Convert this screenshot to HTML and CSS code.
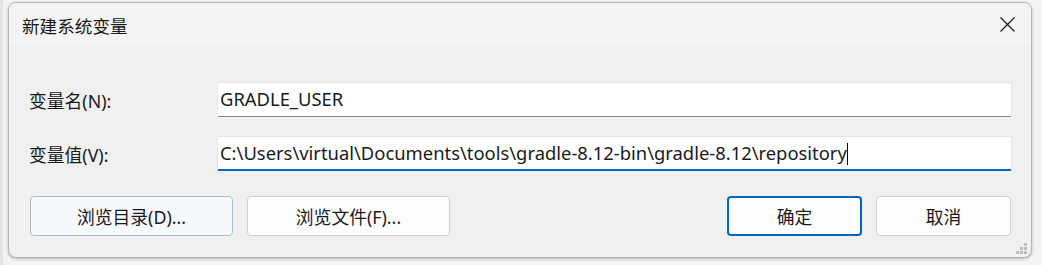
FILE: index.html
```html
<!DOCTYPE html>
<html lang="zh-CN">
<head>
    <meta charset="UTF-8">
    <title>新建系统变量</title>
    <link rel="stylesheet" href="styles.css">
</head>
<body>
    <div class="backdrop">
        <div class="dialog">
            <!-- 标题栏 -->
            <div class="titlebar">
                <span class="title">新建系统变量</span>
                <svg class="close" width="15" height="15" viewBox="0 0 15 15">
                    <path d="M0.5 0.5 L14.5 14.5 M14.5 0.5 L0.5 14.5" stroke="#1a1a1a" stroke-width="1.2" fill="none"/>
                </svg>
            </div>

            <!-- 表单 -->
            <div class="form">
                <div class="row">
                    <label class="label">变量名(N):</label>
                    <div class="input">GRADLE_USER</div>
                </div>
                <div class="row">
                    <label class="label">变量值(V):</label>
                    <div class="input focused">C:\Users\virtual\Documents\tools\gradle-8.12-bin\gradle-8.12\repository<span class="caret"></span></div>
                </div>
            </div>

            <!-- 按钮 -->
            <div class="buttons">
                <div class="left-buttons">
                    <button class="btn btn-wide hover">浏览目录(D)...</button>
                    <button class="btn btn-wide">浏览文件(F)...</button>
                </div>
                <div class="right-buttons">
                    <button class="btn btn-small primary">确定</button>
                    <button class="btn btn-small">取消</button>
                </div>
            </div>

            <svg class="grip" width="12" height="12" viewBox="0 0 12 12">
                <rect x="8" y="0" width="3" height="3" fill="#bcbcbc"/>
                <rect x="4" y="4" width="3" height="3" fill="#bcbcbc"/>
                <rect x="8" y="4" width="3" height="3" fill="#bcbcbc"/>
                <rect x="0" y="8" width="3" height="3" fill="#bcbcbc"/>
                <rect x="4" y="8" width="3" height="3" fill="#bcbcbc"/>
                <rect x="8" y="8" width="3" height="3" fill="#bcbcbc"/>
            </svg>
        </div>
    </div>
</body>
</html>
```

FILE: styles.css
```css
body {
    margin: 0;
    background-color: #e9e9e9;
    font-family: "Noto Sans", "Noto Sans CJK SC", sans-serif;
    color: #1a1a1a;
}
.backdrop {
    height: 265px;
    padding: 2px 10px 0 8px;
    box-sizing: border-box;
    background: linear-gradient(to right, #e3e3e3 0, #e3e3e3 3px, #f3f3f3 3px);
}
.dialog {
    position: relative;
    width: 1024px;
    height: 256px;
    box-sizing: border-box;
    background-color: #f0f0f0;
    border: 1px solid #b4b4b4;
    border-radius: 8px;
    box-shadow: 0 1px 3px rgba(0, 0, 0, 0.25);
    overflow: hidden;
}
.titlebar {
    height: 42px;
    display: flex;
    align-items: center;
    justify-content: space-between;
    padding: 0 16px 0 13px;
    background-color: #f3f3f3;
}
.title {
    font-size: 17.6px;
    padding-top: 2px;
}
.close {
    display: block;
    margin-top: 1px;
}
.form {
    padding: 37px 19px 0 19px;
    display: flex;
    flex-direction: column;
    gap: 19px;
}
.row {
    display: flex;
    align-items: center;
}
.label {
    width: 188px;
    font-size: 17.8px;
    padding-left: 1px;
}
.input {
    flex: 1;
    height: 35px;
    box-sizing: border-box;
    background-color: #fff;
    border: 1px solid #e5e5e5;
    border-bottom: 1px solid #868686;
    border-radius: 2px;
    padding-left: 2px;
    font-size: 18.4px;
    line-height: 31px;
    white-space: nowrap;
    overflow: hidden;
}
.input.focused {
    border-bottom: 2px solid #0067c0;
}
.caret {
    display: inline-block;
    width: 1px;
    height: 22px;
    background-color: #000;
    vertical-align: -5px;
}
.buttons {
    display: flex;
    justify-content: space-between;
    padding: 25px 20px 0 21px;
}
.left-buttons, .right-buttons {
    display: flex;
    gap: 14px;
}
.btn {
    height: 40px;
    font-family: "Noto Sans", "Noto Sans CJK SC", sans-serif;
    font-size: 17.8px;
    color: #1a1a1a;
    background-color: #fdfdfd;
    border: 1px solid #d0d0d0;
    border-radius: 4px;
    padding: 0;
}
.btn-wide {
    width: 203px;
}
.btn-small {
    width: 135px;
}
.btn.hover {
    background-color: #f6f9fc;
    border-color: #a9bccf;
}
.btn.primary {
    border: 2px solid #0067c0;
}
.grip {
    position: absolute;
    right: 3px;
    bottom: 2px;
}
```
